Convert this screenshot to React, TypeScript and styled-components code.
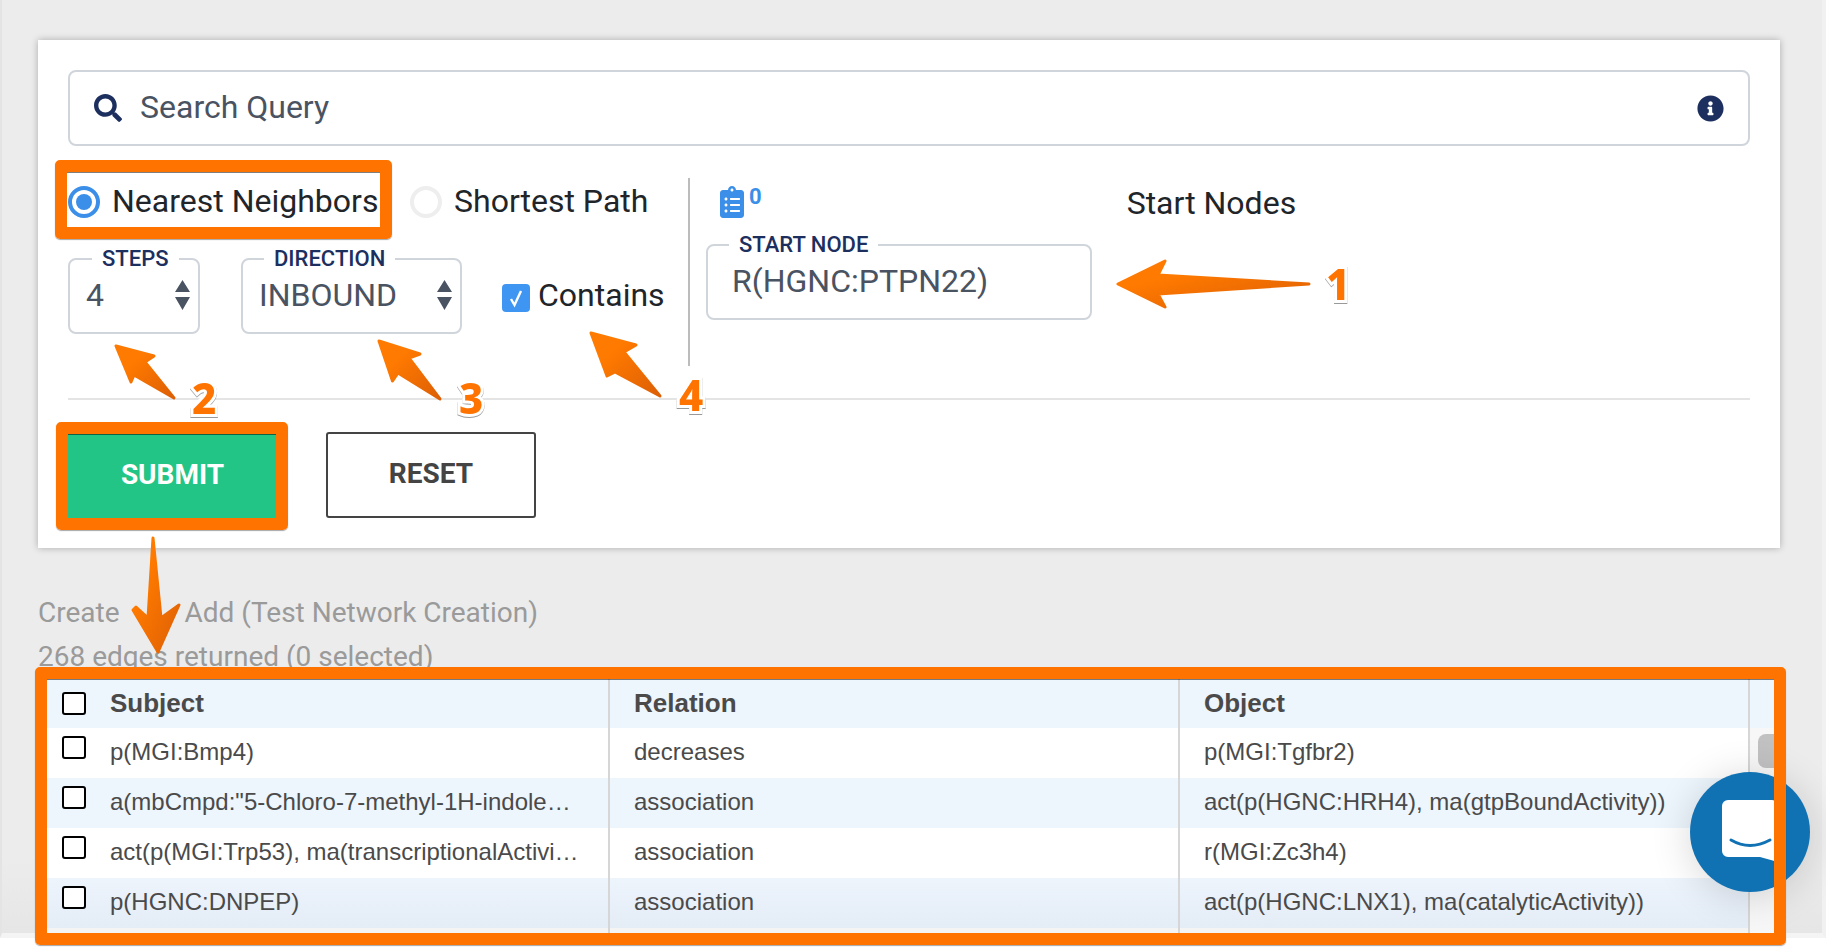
import React from 'react';
import styled, {createGlobalStyle} from 'styled-components';
import {FaSearch, FaInfoCircle, FaClipboardList} from 'react-icons/fa';

const GlobalStyle = createGlobalStyle`
  html, body {
    margin: 0;
    padding: 0;
    background: #fff;
    overflow: hidden;
  }
  * {
    box-sizing: border-box;
  }
`;

const Page = styled.div`
  position: relative;
  width: 1826px;
  height: 949px;
  overflow: hidden;
  font-family: Roboto, "Liberation Sans", sans-serif;
`;
const Shell = styled.main`
  width: 1826px;
  height: 938px;
  padding: 40px 0 0 36px;
  background: linear-gradient(#ececec 92%, #e6e6e6);
  border-left: 2px solid #e4e4e4;
  border-right: 4px solid #f1f1f1;
  border-bottom: 5px solid #f4f4f4;
`;
const Card = styled.section`
  width: 1742px;
  height: 508px;
  padding: 30px 30px 0 30px;
  background: #fff;
  box-shadow: 0 0 7px rgba(0, 0, 0, 0.28);
`;
const SearchBox = styled.div`
  display: flex;
  align-items: center;
  height: 76px;
  padding: 0 24px 0 24px;
  border: 2px solid #d0d5dc;
  border-radius: 8px;
  color: #1c2f5e;
`;
const SearchText = styled.span`
  flex: 1;
  margin: -2px 0 0 18px;
  font-size: 32px;
  color: #4a5361;
`;
const SearchIcon = styled(FaSearch)`
  width: 28px;
  height: 28px;
`;
const InfoIcon = styled(FaInfoCircle)`
  width: 27px;
  height: 27px;
`;
const Controls = styled.div`
  display: flex;
  height: 188px;
  margin-top: 32px;
`;
const LeftPane = styled.div`
  width: 620px;
  padding-top: 8px;
`;
const RadioRow = styled.div`
  display: flex;
  height: 32px;
  align-items: center;
`;
const RadioCircle = styled.span<{$on?: boolean}>`
  display: flex;
  align-items: center;
  justify-content: center;
  flex: none;
  width: 32px;
  height: 32px;
  border-radius: 50%;
  border: 4px solid ${({$on}) => ($on ? '#3b8fe8' : '#eeeeee')};

  &:after {
    content: '';
    display: ${({$on}) => ($on ? 'block' : 'none')};
    width: 16px;
    height: 16px;
    border-radius: 50%;
    background: #3b8fe8;
  }
`;
const RadioLabel = styled.span<{$width: number}>`
  width: ${({$width}) => $width}px;
  margin: -2px 0 0 12px;
  font-size: 32px;
  color: #212529;
  white-space: nowrap;
`;
const FieldRow = styled.div`
  display: flex;
  align-items: flex-start;
  margin-top: 40px;
`;
const Field = styled.div<{$width: number}>`
  position: relative;
  display: flex;
  align-items: center;
  justify-content: space-between;
  width: ${({$width}) => $width}px;
  height: 76px;
  padding: 0 8px 3px 16px;
  border: 2px solid #d0d5dc;
  border-radius: 8px;
  font-size: 32px;
  color: #4a5361;
`;
const DirectionField = styled(Field)`
  margin-left: 41px;
`;
const Legend = styled.span<{$left: number}>`
  position: absolute;
  top: -14px;
  left: ${({$left}) => $left}px;
  padding: 0 10px;
  background: #fff;
  font-size: 22px;
  line-height: 26px;
  font-weight: 500;
  color: #1c2f5e;
  white-space: nowrap;
`;
const Stepper = styled.svg`
  flex: none;
  width: 15px;
  height: 30px;
  fill: #4a5361;
`;
const ContainsWrap = styled.label`
  display: flex;
  align-items: center;
  height: 75px;
  margin-left: 40px;
  padding-bottom: 2px;
  font-size: 32px;
  color: #212529;
`;
const CheckBlue = styled.span`
  display: flex;
  align-items: center;
  justify-content: center;
  width: 28px;
  height: 28px;
  margin: 6px 8px 0 0;
  border-radius: 4px;
  background: #3f95f2;
`;
const VRule = styled.div`
  width: 2px;
  background: #bcbcbc;
`;
const RightPane = styled.div`
  padding: 8px 0 0 16px;
`;
const ListRow = styled.div`
  display: flex;
  height: 32px;
  padding-left: 14px;
  color: #3b8fe8;
`;
const ListIcon = styled(FaClipboardList)`
  width: 24px;
  height: 32px;
`;
const ListCount = styled.span`
  margin: -2px 0 0 5px;
  font-size: 22px;
  line-height: 26px;
  font-weight: 700;
`;
const StartTitle = styled.span`
  margin: -1px 0 0 365px;
  font-size: 32px;
  line-height: 36px;
  color: #212529;
`;
const StartField = styled(Field)`
  margin-top: 26px;
  padding-left: 24px;
`;
const HRule = styled.div`
  height: 2px;
  margin-top: 32px;
  background: #e4e4e4;
`;
const ButtonRow = styled.div`
  display: flex;
  align-items: flex-start;
  gap: 49px;
  margin-top: 32px;
`;
const SubmitButton = styled.button`
  width: 209px;
  height: 84px;
  margin-top: 2px;
  padding: 0 0 4px;
  border: 0;
  background: #22c585;
  color: #fff;
  font: 700 28px Roboto, sans-serif;
`;
const ResetButton = styled.button`
  width: 210px;
  height: 86px;
  padding: 0 0 3px;
  border: 2px solid #444;
  border-radius: 3px;
  background: #fff;
  color: #444;
  font: 700 28px Roboto, sans-serif;
`;
const LinkRow = styled.div`
  display: flex;
  gap: 65px;
  margin-top: 43px;
  font-size: 28px;
  line-height: 43px;
  color: #9a9a9a;
`;
const CountLine = styled.div`
  margin-top: 1px;
  font-size: 28px;
  line-height: 43px;
  color: #9a9a9a;
`;
const Table = styled.div`
  display: flex;
  flex-direction: column;
  width: 1730px;
  height: 254px;
  margin: 1px 0 0 9px;
  overflow: hidden;
  background: #fff;
  font-family: "Liberation Sans", Arial, sans-serif;
  font-size: 24px;
  color: #4a4a4a;
`;
const HeaderRow = styled.div`
  display: grid;
  grid-template-columns: 563px 570px 570px 1fr;
  height: 49px;
  background: #edf5fd;
  font-size: 26px;
  font-weight: 700;
`;
const TableBody = styled.div`
  display: flex;
  flex: 1;
`;
const BodyRows = styled.div`
  width: 1703px;
`;
const Row = styled.div<{$odd?: boolean; $height?: number}>`
  display: grid;
  grid-template-columns: 563px 570px 570px;
  height: ${({$height}) => $height ?? 50}px;
  background: ${({$odd}) => ($odd ? '#edf5fd' : '#fff')};

  &:nth-child(4) {
    background: linear-gradient(#edf4fc, #e4ecf6);
  }
  &:nth-child(5) {
    background: #f4f4f4;
  }
`;
const Cell = styled.div`
  display: flex;
  align-items: center;
  padding: 0 0 2px 24px;
  border-right: 2px solid #d6d6d6;
  white-space: nowrap;
  overflow: hidden;
`;
const HeadCell = styled(Cell)`
  padding-bottom: 0;
`;
const FirstCell = styled(Cell)`
  padding-left: 15px;
`;
const FirstHeadCell = styled(HeadCell)`
  padding-left: 15px;
`;
const TickBox = styled.span<{$head?: boolean}>`
  flex: none;
  width: 24px;
  height: 23px;
  margin: ${({$head}) => ($head ? '0' : '-9px')} 24px 0 0;
  border: 2px solid #000;
  border-radius: 3px;
  background: #fff;
`;
const Scrollbar = styled.div`
  flex: 1;
  padding: 6px 0 0 8px;
  background: #f7f7f7;
`;
const Thumb = styled.div`
  width: 24px;
  height: 34px;
  border-radius: 8px;
  background: #c1c1c1;
`;
const ChatButton = styled.div`
  position: absolute;
  left: 1690px;
  top: 772px;
  width: 120px;
  height: 120px;
  border-radius: 50%;
  background: #1172b3;
  box-shadow: 0 4px 40px rgba(0, 0, 0, 0.16);
`;
const ChatGlyph = styled.svg`
  display: block;
  width: 120px;
  height: 120px;
`;
const Highlight = styled.div<{$x: number; $y: number; $w: number; $h: number}>`
  position: absolute;
  left: ${({$x}) => $x}px;
  top: ${({$y}) => $y}px;
  width: ${({$w}) => $w}px;
  height: ${({$h}) => $h}px;
  border: 12px solid #ff7300;
  border-radius: 5px;
  box-shadow: inset 0 1px 0 rgba(0, 0, 0, 0.5), 0 1px 1px rgba(0, 0, 0, 0.35);
`;
const ArrowLayer = styled.svg`
  position: absolute;
  left: 0;
  top: 0;
  width: 1826px;
  height: 949px;
  pointer-events: none;
`;
const Digit = styled.span<{$x: number; $y: number}>`
  position: absolute;
  left: ${({$x}) => $x}px;
  top: ${({$y}) => $y}px;
  font-family: "Noto Sans", sans-serif;
  font-size: 42px;
  line-height: 42px;
  font-weight: 800;
  color: #ff7300;
  -webkit-text-stroke: 6px #fff;
  paint-order: stroke fill;
  filter: drop-shadow(0 1px 0 rgba(0, 0, 0, 0.4));
`;

const rows = [
  ['p(MGI:Bmp4)', 'decreases', 'p(MGI:Tgfbr2)'],
  ['a(mbCmpd:"5-Chloro-7-methyl-1H-indole\u2026', 'association', 'act(p(HGNC:HRH4), ma(gtpBoundActivity))'],
  ['act(p(MGI:Trp53), ma(transcriptionalActivi\u2026', 'association', 'r(MGI:Zc3h4)'],
  ['p(HGNC:DNPEP)', 'association', 'act(p(HGNC:LNX1), ma(catalyticActivity))'],
];

const arrows = [
  '1118,284 1165,261 1158,275 1309,284 1158,294 1165,307',
  '116,346 154,356 145,362 174,398 134,375 131,382',
  '379,341 420,354 409,358 440,399 398,373 392.5,381',
  '591,333 636,345 624,352 660,396 615,372 607,376',
  '153,538 161,618 179,605 158,652 133,610 136,607 148,618',
];

const Updown = () => (
  <Stepper viewBox="0 0 15 30">
    <path d="M7.5 0 15 12H0zM0 17h15L7.5 30z" />
  </Stepper>
);

const App = () => (
  <Page>
    <GlobalStyle />
    <Shell>
      <Card>
        <SearchBox>
          <SearchIcon />
          <SearchText>Search Query</SearchText>
          <InfoIcon />
        </SearchBox>

        <Controls>
          <LeftPane>
            <RadioRow>
              <RadioCircle $on />
              <RadioLabel $width={298}>Nearest Neighbors</RadioLabel>
              <RadioCircle />
              <RadioLabel $width={200}>Shortest Path</RadioLabel>
            </RadioRow>
            <FieldRow>
              <Field $width={132}>
                4
                <Updown />
                <Legend $left={22}>STEPS</Legend>
              </Field>
              <DirectionField $width={221}>
                INBOUND
                <Updown />
                <Legend $left={21}>DIRECTION</Legend>
              </DirectionField>
              <ContainsWrap>
                <CheckBlue>
                  <svg width="20" height="20" viewBox="0 0 20 20" fill="none">
                    <path d="M5 11 8.5 17 15 3" stroke="#fff" strokeWidth="2.4" />
                  </svg>
                </CheckBlue>
                Contains
              </ContainsWrap>
            </FieldRow>
          </LeftPane>
          <VRule />
          <RightPane>
            <ListRow>
              <ListIcon />
              <ListCount>0</ListCount>
              <StartTitle>Start Nodes</StartTitle>
            </ListRow>
            <StartField $width={386}>
              R(HGNC:PTPN22)
              <Legend $left={21}>START NODE</Legend>
            </StartField>
          </RightPane>
        </Controls>

        <HRule />

        <ButtonRow>
          <SubmitButton>SUBMIT</SubmitButton>
          <ResetButton>RESET</ResetButton>
        </ButtonRow>
      </Card>

      <LinkRow>
        <span>Create</span>
        <span>Add (Test Network Creation)</span>
      </LinkRow>
      <CountLine>268 edges returned (0 selected)</CountLine>

      <Table>
        <HeaderRow>
          <FirstHeadCell>
            <TickBox $head />
            Subject
          </FirstHeadCell>
          <HeadCell>Relation</HeadCell>
          <HeadCell>Object</HeadCell>
          <HeadCell />
        </HeaderRow>
        <TableBody>
          <BodyRows>
            {rows.map((row, i) => (
              <Row key={i} $odd={i % 2 === 1}>
                <FirstCell>
                  <TickBox />
                  {row[0]}
                </FirstCell>
                <Cell>{row[1]}</Cell>
                <Cell>{row[2]}</Cell>
              </Row>
            ))}
            <Row $height={5}>
              <FirstCell />
              <Cell />
              <Cell />
            </Row>
          </BodyRows>
          <Scrollbar>
            <Thumb />
          </Scrollbar>
        </TableBody>
      </Table>
    </Shell>

    <ChatButton>
      <ChatGlyph viewBox="0 0 120 120">
        <path
          d="M38 28h44a6 6 0 0 1 6 6v56l-18-5H38a6 6 0 0 1-6-6V34a6 6 0 0 1 6-6z"
          fill="#fff"
        />
        <path d="M41 68c12 7 26 7 39 0" fill="none" stroke="#1172b3" strokeWidth="3" strokeLinecap="round" />
      </ChatGlyph>
    </ChatButton>

    <Highlight $x={55} $y={160} $w={337} $h={79} />
    <Highlight $x={56} $y={422} $w={232} $h={108} />
    <Highlight $x={35} $y={667} $w={1751} $h={278} />

    <ArrowLayer viewBox="0 0 1826 949">
      <defs>
        <linearGradient id="arrowFill" x1="0" y1="0" x2="1" y2="1">
          <stop offset="0.3" stopColor="#ff7a00" />
          <stop offset="1" stopColor="#dd5f05" />
        </linearGradient>
      </defs>
      {arrows.map((points, i) => (
        <polygon
          key={i}
          points={points}
          fill="url(#arrowFill)"
          stroke="url(#arrowFill)"
          strokeWidth="3"
          strokeLinejoin="round"
        />
      ))}
    </ArrowLayer>

    <Digit $x={1326} $y={263}>1</Digit>
    <Digit $x={192} $y={377}>2</Digit>
    <Digit $x={459} $y={377}>3</Digit>
    <Digit $x={679} $y={374}>4</Digit>
  </Page>
);

export default App;
